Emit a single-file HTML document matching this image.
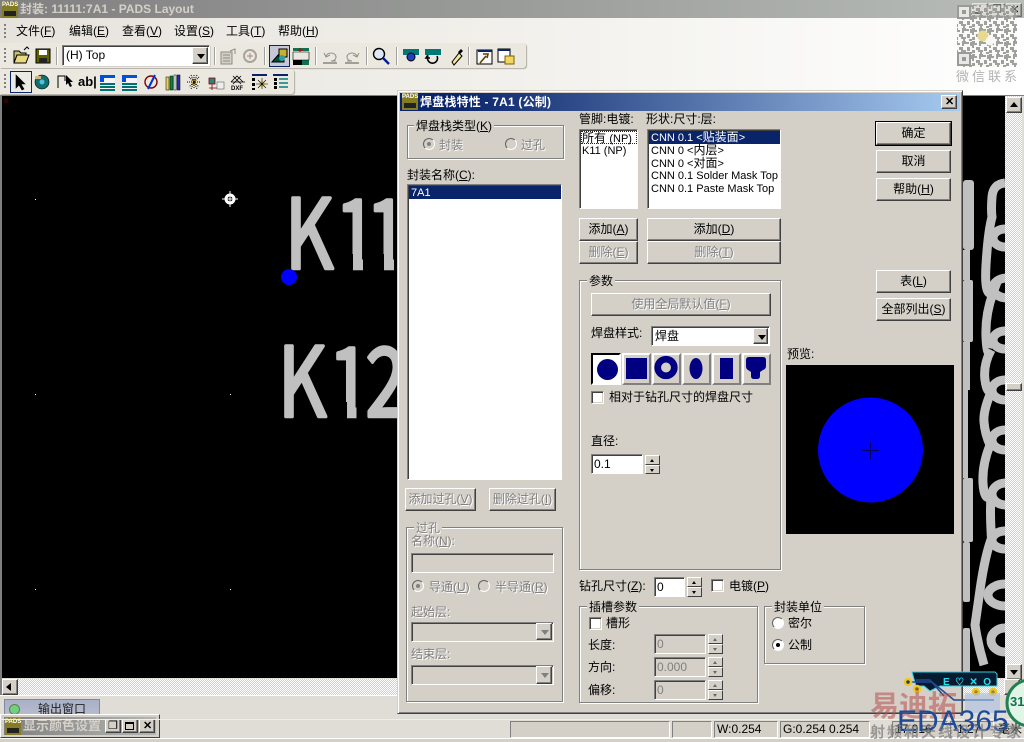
<!DOCTYPE html>
<html><head><meta charset="utf-8"><title>PADS Layout</title>
<style>
html,body{margin:0;padding:0;width:1024px;height:742px;overflow:hidden;background:#e0ddd6}
*{box-sizing:border-box}
body{font:12px/13px "Liberation Sans","WenQuanYi Zen Hei","Noto Sans CJK SC",sans-serif;color:#000;position:relative}
.a{position:absolute}
.t{position:absolute;white-space:nowrap;line-height:14px}
.l{font-size:11px}
.d{color:#808080;text-shadow:1px 1px 0 #fff}
.btn{position:absolute;background:#d4d0c8;border:1px solid;border-color:#fff #404040 #404040 #fff;box-shadow:inset -1px -1px 0 #808080;text-align:center;white-space:nowrap}
.btn.k{outline:1px solid #000;outline-offset:0}
.in{position:absolute;background:#fff;border:1px solid;border-color:#808080 #fff #fff #808080;box-shadow:inset 1px 1px 0 #404040,1px 1px 0 #d4d0c8;white-space:nowrap}
.in.g{background:#d4d0c8}
.grp{position:absolute;border:1px solid #808080;box-shadow:1px 1px 0 #fff,inset 1px 1px 0 #fff}
.grp>b{position:absolute;left:7px;top:-6px;background:#d4d0c8;padding:0 2px;font-weight:normal;line-height:12px;white-space:nowrap}
.sel{position:absolute;background:#0a246a;color:#fff;white-space:nowrap;padding-left:2px;line-height:13px}
.cb{position:absolute;width:13px;height:13px;background:#fff;border:1px solid;border-color:#808080 #fff #fff #808080;box-shadow:inset 1px 1px 0 #404040,inset -1px -1px 0 #d4d0c8}
.r{position:absolute;width:12px;height:12px;border-radius:50%;background:#fff;border:1px solid;border-color:#606060 #fff #fff #606060;box-shadow:0 0 0 .5px #d4d0c8}
.r.g{background:#d4d0c8}
.r.on::after{content:"";position:absolute;left:3px;top:3px;width:4px;height:4px;border-radius:50%;background:#000}
.r.g.on::after{background:#808080}
.sp{position:absolute;width:15px}
.sp i{display:block;height:50%;background:#d4d0c8;border:1px solid;border-color:#fff #404040 #404040 #fff;position:relative}
.sp i::after{content:"";position:absolute;left:4px;top:3px;border:2.5px solid transparent}
.sp i:first-child::after{border-bottom:3px solid #000;border-top:0}
.sp i:last-child::after{border-top:3px solid #000;border-bottom:0}
.sp.g i::after{opacity:.5}
.dd{position:absolute;background:#d4d0c8;border:1px solid;border-color:#fff #404040 #404040 #fff;box-shadow:inset -1px -1px 0 #808080}
.dd::after{content:"";position:absolute;left:4px;top:6px;border:4px solid transparent;border-top:5px solid #000;border-bottom:0}
.dd.g::after{border-top-color:#808080}
.sh{position:absolute;top:353px;height:32px;background:#d4d0c8;border:2px solid;border-color:#fff #808080 #808080 #fff}
.sep{position:absolute;width:2px;border-left:1px solid #a0a0a0;border-right:1px solid #fff}
.tb{position:absolute;background:#ebe8e0;box-shadow:1px 1px 1px #b0aca4;border-radius:0 3px 3px 0}
.grip{position:absolute;width:2px;height:14px;background:repeating-linear-gradient(#808080 0 2px,transparent 2px 4px)}
.chk{background:repeating-conic-gradient(#fff 0 25%,#d4d0c8 0 50%) 0 0/2px 2px}
.pads{position:absolute;width:16px;height:17px;background:#847c22;overflow:hidden;color:#fff;font:bold 6px/8px "Liberation Sans",sans-serif;text-align:center;white-space:nowrap}
.pads::after{content:"";position:absolute;left:2px;top:10px;width:12px;height:5px;background:#222}
.sb{position:absolute;background:#d4d0c8;border:1px solid;border-color:#fff #404040 #404040 #fff;box-shadow:inset -1px -1px 0 #808080}
</style></head><body>

<!-- top chrome -->
<div class="a" style="left:0;top:0;width:1024px;height:18px;background:linear-gradient(90deg,#808080,#9a9c9a 50%,#b8bdb8)"></div>
<div class="pads" style="left:2px;top:1px">PADS</div>
<div class="t" style="left:20px;top:2px;color:#d4d0c8;font-weight:bold;font-size:12px">封装: 11111:7A1 - PADS Layout</div>
<div class="a" style="left:0;top:18px;width:1024px;height:78px;background:linear-gradient(90deg,#e6e3dc,#f4f3ef 60%,#fff)"></div>
<div class="grip" style="left:4px;top:24px"></div>
<div class="t" style="left:16px;top:24px">文件(<u>F</u>)</div>
<div class="t" style="left:69px;top:24px">编辑(<u>E</u>)</div>
<div class="t" style="left:122px;top:24px">查看(<u>V</u>)</div>
<div class="t" style="left:174px;top:24px">设置(<u>S</u>)</div>
<div class="t" style="left:226px;top:24px">工具(<u>T</u>)</div>
<div class="t" style="left:278px;top:24px">帮助(<u>H</u>)</div>

<div class="tb" style="left:0;top:43px;width:526px;height:25px"></div>
<div class="tb" style="left:0;top:69px;width:294px;height:25px"></div>
<div class="grip" style="left:4px;top:48px"></div>
<div class="grip" style="left:4px;top:74px"></div>
<div class="in" style="left:62px;top:45px;width:148px;height:21px;padding:3px 0 0 3px">(H) Top</div>
<div class="dd" style="left:192px;top:47px;width:16px;height:17px"></div>
<div class="sep" style="left:56px;top:47px;height:18px"></div>
<div class="sep" style="left:214px;top:47px;height:18px"></div>
<div class="sep" style="left:264px;top:47px;height:18px"></div>
<div class="sep" style="left:315px;top:47px;height:18px"></div>
<div class="sep" style="left:366px;top:47px;height:18px"></div>
<div class="sep" style="left:396px;top:47px;height:18px"></div>
<div class="sep" style="left:468px;top:47px;height:18px"></div>
<div class="a" style="left:269px;top:45px;width:21px;height:22px;background:#c6c8d8;border:1px solid #0a246a"></div>
<div class="a" style="left:10px;top:71px;width:22px;height:22px;background:#eceae4;border:1px solid #0a246a"></div>
<div class="t" style="left:78px;top:75px;font-weight:bold;font-size:13px">ab|</div>

<svg class="a" style="left:0;top:0" width="530" height="96">
<!-- open -->
<path d="M14 51h5l2 2h5v2h-9l-3 8z" fill="#c8c070" stroke="#000"/><path d="M14 63l3-8h12l-3 8z" fill="#e8d880" stroke="#000"/><path d="M24 50l3-3 2 2" fill="none" stroke="#000"/>
<!-- save -->
<rect x="36" y="49" width="14" height="14" fill="#606000" stroke="#000"/><rect x="39" y="50" width="8" height="5" fill="#fff"/><rect x="39" y="58" width="8" height="5" fill="#222"/>
<!-- disabled -->
<path d="M221 52h11v12h-11z" fill="#d4d0c8" stroke="#908c84"/><path d="M223 55h7M223 58h7M223 61h7M230 51l5-2v5" stroke="#908c84" fill="none"/>
<circle cx="250" cy="56" r="6" fill="none" stroke="#a8a49c" stroke-width="2"/><path d="M247 56h6M250 53v6" stroke="#a08888"/>
<!-- active -->
<path d="M272 62l7-8 3 3 2-1v6z" fill="#005040" stroke="#000"/><rect x="279" y="49" width="8" height="8" fill="#c8b030" stroke="#000"/><circle cx="282" cy="58" r="3" fill="#30a0a0"/>
<!-- board -->
<rect x="293" y="48" width="16" height="3" fill="#107050"/><rect x="293" y="60" width="16" height="5" fill="#107050"/><path d="M293 52h16v8h-16z" fill="#e8e8e0" stroke="#000" stroke-width=".6"/><path d="M300 48v4M298 50h5" stroke="#c00000"/><rect x="293" y="60" width="9" height="5" fill="#000"/>
<!-- undo redo -->
<path d="M326 57a5 4 0 1 1 5 4h5M324 53l2 4 4-2" fill="none" stroke="#909088"/><rect x="323" y="62" width="14" height="2" fill="#a0a098"/>
<path d="M357 57a5 4 0 1 0-5 4h-5M359 53l-2 4-4-2" fill="none" stroke="#909088"/><rect x="345" y="62" width="14" height="2" fill="#a0a098"/>
<!-- zoom -->
<circle cx="379" cy="54" r="5.5" fill="#dfe8f8" stroke="#000" stroke-width="1.4"/><path d="M383 58l6 6" stroke="#002090" stroke-width="2.4"/>
<!-- teal icons -->
<path d="M403 49h16v6h-4v2h-8v-2h-4z" fill="#007878"/><circle cx="411" cy="57" r="4" fill="#2040c0" stroke="#000"/>
<path d="M425 49h16v6h-16z" fill="#007878"/><path d="M428 56a5 5 0 1 0 9 0M428 55l-2 3h4" fill="none" stroke="#000" stroke-width="1.6"/>
<path d="M452 62l7-9 3 3-8 9z" fill="#f0e8a0" stroke="#000"/><path d="M458 52l3-3 2 2-3 3z" fill="#000"/>
<rect x="477" y="50" width="15" height="14" fill="#f8f8f8" stroke="#000"/><path d="M478 50h14v2h-14z" fill="#0a246a"/><path d="M480 63l6-7M483 54h5l-1 4" stroke="#604000" stroke-width="1.6" fill="none"/>
<rect x="498" y="49" width="12" height="13" fill="#fff" stroke="#000"/><path d="M498 49h12v2h-12z" fill="#0a246a"/><rect x="505" y="56" width="9" height="8" fill="#f0d860" stroke="#806000"/>
<!-- row 3 -->
<path d="M16 75l0 13 3-3 3 5 2-1-3-5 4 0z" fill="#000" stroke="#000" stroke-width=".6"/>
<circle cx="42" cy="82" r="7" fill="#107070" stroke="#000" stroke-width=".6"/><circle cx="42" cy="82" r="2.5" fill="#50c0e0"/><path d="M35 76h6v3h-6z" fill="#c8b888"/>
<path d="M58 88v-12h7v5" fill="none" stroke="#000"/><path d="M66 75v10l2-2 2 4 2-1-2-4 3 0z"/>
<g><rect x="100" y="75" width="15" height="15" fill="#f4f4f4"/><path d="M100 75h15v3h-11v4h-4z" fill="#0050e0"/><path d="M100 84h15M100 87h15M100 90h15" stroke="#007070" stroke-width="2"/></g>
<g><rect x="122" y="75" width="15" height="15" fill="#f4f4f4"/><path d="M122 82v-7h15v3h-11v4z" fill="#0050e0"/><path d="M122 84h15M122 87h15M122 90h15" stroke="#007070" stroke-width="2"/></g>
<circle cx="151" cy="82" r="6" fill="none" stroke="#800000" stroke-width="1.4"/><path d="M148 89l7-14" stroke="#0030e0" stroke-width="2"/>
<rect x="166" y="77" width="3" height="13" fill="#e8d060" stroke="#000" stroke-width=".5"/><rect x="170" y="76" width="3" height="14" fill="#108040" stroke="#000" stroke-width=".5"/><rect x="174" y="75" width="2" height="15" fill="#fff" stroke="#000" stroke-width=".5"/><rect x="177" y="75" width="3" height="15" fill="#2030b0" stroke="#000" stroke-width=".5"/>
<circle cx="194" cy="82" r="3" fill="#f0d860"/><path d="M187 82h14M194 75v14M189 77l10 10M199 77l-10 10M191 75l6 14M197 75l-6 14" stroke="#000" stroke-width="1" stroke-dasharray="1 1"/>
<path d="M209 78h6v6h-6zM212 84v6M209 88h15" fill="#308080" stroke="#800000" stroke-width=".8"/><rect x="217" y="82" width="7" height="7" fill="#eee" stroke="#606060" stroke-width=".6"/>
<path d="M231 82l6-6 6 6M233 76l8 8M241 76l-8 8M231 82h14" fill="none" stroke="#000" stroke-width=".8"/>
<rect x="252" y="74" width="15" height="2" fill="#0a246a"/><path d="M252 78h3v3h-3zM252 83h3v3h-3zM252 88h3v2h-3z" fill="#000"/><circle cx="262" cy="84" r="3" fill="#f0d860"/><path d="M256 84h12M262 78v11M258 80l8 8M266 80l-8 8" stroke="#000" stroke-width=".6"/>
<rect x="273" y="74" width="15" height="2" fill="#0a246a"/><path d="M274 78h3v3h-3zM274 82h3v3h-3zM274 86h3v3h-3z" fill="#000"/><path d="M279 79h9M279 83h9M279 87h9" stroke="#008080" stroke-width="1.5"/>
<text x="231" y="90" font-family="Liberation Sans" font-size="6" font-weight="bold">DXF</text>
</svg>

<!-- canvas -->
<div class="a" style="left:0;top:95px;width:1024px;height:1px;background:#808080"></div>
<div class="a" style="left:0;top:96px;width:2px;height:600px;background:#808080"></div>
<svg class="a" style="left:2px;top:96px" width="1003" height="582" viewBox="2 96 1003 582">
<rect x="2" y="96" width="1003" height="582" fill="#000"/>
<circle cx="6" cy="101" r="2.5" fill="#300000"/>
<g fill="#fff"><rect x="35" y="199" width="1" height="1"/><rect x="35" y="394" width="1" height="1"/><rect x="230" y="394" width="1" height="1"/><rect x="35" y="589" width="1" height="1"/><rect x="230" y="589" width="1" height="1"/></g>
<circle cx="230" cy="199" r="4" fill="none" stroke="#fff" stroke-width="3"/><path d="M222 199h16M230 191v16" stroke="#fff"/><rect x="229.500" y="198.500" width="1" height="1" fill="#fff"/>
<g fill="#c0c0c0" stroke="#c0c0c0" stroke-width="3.500" stroke-linejoin="round" font-family="'Noto Sans CJK SC',sans-serif" font-size="96">
<text transform="translate(0 268.300) scale(.78 1)" x="365.400 429.500 469.200">K11</text>
<text transform="translate(0 416.300) scale(.78 1)" x="356.400 421.200 468.600">K12</text>
</g>
<g fill="#000">
<rect x="337" y="254" width="16" height="20"/><rect x="363" y="254" width="21" height="20"/><rect x="394" y="254" width="5" height="20"/>
<rect x="331" y="402" width="16" height="20"/><rect x="356.500" y="402" width="10" height="20"/>
</g>
<circle cx="289" cy="277" r="8" fill="#0000ff"/>
<g fill="#c0c0c0"><rect x="963" y="180" width="11" height="70" rx="3"/><rect x="963" y="250" width="7" height="30"/><rect x="963" y="280" width="10" height="62" rx="2"/><rect x="963" y="342" width="7" height="48"/><rect x="963" y="390" width="5" height="88"/><rect x="963" y="478" width="10" height="64" rx="2"/><rect x="963" y="542" width="7" height="60" rx="2"/><rect x="963" y="628" width="7" height="50" rx="2"/></g>
<g fill="none" stroke="#c0c0c0" stroke-width="9">
<path d="M1005 183Q993 184 992 197T992 217Q988 232 986 265T993 293Q985 315 986 337T991 350Q983 365 985 380T992 390Q983 410 984 422T990 445Q982 465 983 483T991 497Q990 510 991 530T992 537Q985 555 980 590T975 625Q978 645 984 665"/>
<ellipse cx="1005" cy="238" rx="12" ry="9"/><ellipse cx="1007" cy="288" rx="14" ry="10"/><ellipse cx="1005" cy="340" rx="12" ry="9"/><ellipse cx="1005" cy="390" rx="13" ry="10"/><ellipse cx="1005" cy="440" rx="13" ry="10"/><ellipse cx="1006" cy="494" rx="14" ry="11"/><ellipse cx="1005" cy="540" rx="13" ry="9"/><ellipse cx="1005" cy="595" rx="17" ry="11"/><ellipse cx="1005" cy="640" rx="14" ry="12"/>
</g>
</svg>
<div class="a chk" style="left:1005px;top:96px;width:17px;height:582px"></div>
<div class="sb" style="left:1006px;top:97px;width:16px;height:16px"></div>
<div class="a" style="left:1010px;top:102px;border:4px solid transparent;border-bottom:5px solid #000;border-top:0"></div>
<div class="sb" style="left:1006px;top:383px;width:16px;height:8px"></div>
<div class="sb" style="left:1006px;top:664px;width:16px;height:16px"></div>
<div class="a" style="left:1010px;top:670px;border:4px solid transparent;border-top:5px solid #000;border-bottom:0"></div>
<div class="a chk" style="left:2px;top:679px;width:1003px;height:16px"></div>
<div class="sb" style="left:2px;top:679px;width:16px;height:16px"></div>
<div class="a" style="left:6px;top:683px;border:4px solid transparent;border-right:5px solid #000;border-left:0"></div>
<div class="sb" style="left:1004px;top:679px;width:16px;height:16px"></div>
<div class="a" style="left:0;top:695px;width:400px;height:1px;background:#fff"></div>

<!-- lower bar -->
<div class="a" style="left:4px;top:699px;width:96px;height:18px;background:linear-gradient(#a8b0c8,#b8bccc);border:1px solid #8088a0"></div>
<div class="a" style="left:9px;top:704px;width:11px;height:11px;border-radius:50%;background:#70d080;border:1px solid #608050"></div>
<div class="t" style="left:38px;top:702px;color:#222">输出窗口</div>
<div class="a" style="left:0;top:714px;width:160px;height:24px;background:#d4d0c8;border:1px solid;border-color:#fff #404040 #404040 #fff"></div>
<div class="a" style="left:4px;top:717px;width:152px;height:18px;background:linear-gradient(90deg,#808080,#b4b4b0)"></div>
<div class="pads" style="left:5px;top:718px">PADS</div>
<div class="t" style="left:23px;top:719px;color:#d4d0c8;font-weight:bold;font-size:13px">显示颜色设置</div>
<div class="sb" style="left:105px;top:719px;width:16px;height:14px"></div><div class="t" style="left:108px;top:719px;font-size:11px">❐</div>
<div class="sb" style="left:122px;top:719px;width:16px;height:14px"></div><div class="a" style="left:125px;top:722px;width:9px;height:8px;border:1px solid #000;border-top-width:2px"></div>
<div class="sb" style="left:139px;top:719px;width:16px;height:14px"></div><div class="t" style="left:143px;top:719px;font-weight:bold;font-size:11px">✕</div>

<!-- status bar -->
<div class="a" style="left:0;top:738px;width:1024px;height:4px;background:#d4d0c8;border-top:1px solid #fff"></div>
<div class="a" style="left:0;top:719px;width:1024px;height:1px;background:#f0eee8"></div>
<div class="in g" style="left:510px;top:721px;width:160px;height:17px;box-shadow:none"></div>
<div class="in g" style="left:672px;top:721px;width:40px;height:17px;box-shadow:none"></div>
<div class="in g" style="left:714px;top:721px;width:64px;height:17px;box-shadow:none;padding:1px 0 0 2px">W:0.254</div>
<div class="in g" style="left:780px;top:721px;width:90px;height:17px;box-shadow:none;padding:1px 0 0 2px">G:0.254 0.254</div>
<div class="in g" style="left:892px;top:721px;width:56px;height:17px;box-shadow:none;padding:1px 0 0 2px">17.916</div>
<div class="in g" style="left:950px;top:721px;width:44px;height:17px;box-shadow:none;padding:1px 0 0 2px">-1.27</div>
<div class="t" style="left:998px;top:722px">毫米</div>

<!-- dialog -->
<div class="a" style="left:397px;top:90px;width:566px;height:624px;background:#d4d0c8;border:1px solid;border-color:#d4d0c8 #404040 #404040 #d4d0c8;box-shadow:inset 1px 1px 0 #fff,inset -1px -1px 0 #808080"></div>
<div class="a" style="left:400px;top:93px;width:560px;height:18px;background:linear-gradient(90deg,#0a246a,#0a246a 10%,#a6caf0)"></div>
<div class="pads" style="left:402px;top:93px">PADS</div>
<div class="t" style="left:420px;top:95px;color:#fff;font-weight:bold;letter-spacing:.2px">焊盘栈特性 - 7A1 (公制)</div>
<div class="sb" style="left:941px;top:95px;width:16px;height:14px"></div>
<div class="t" style="left:945px;top:95px;font-weight:bold;font-size:11px">✕</div>

<div class="grp" style="left:407px;top:125px;width:157px;height:34px"><b style="left:6px">焊盘栈类型(<u>K</u>)</b></div>
<div class="r g on" style="left:423px;top:138px"></div><div class="t d" style="left:439px;top:138px">封装</div>
<div class="r g" style="left:505px;top:138px"></div><div class="t d" style="left:521px;top:138px">过孔</div>
<div class="t" style="left:407px;top:168px">封装名称(<u>C</u>):</div>
<div class="in" style="left:407px;top:184px;width:155px;height:296px"></div>
<div class="sel" style="left:409px;top:186px;width:152px;height:13px"><span class="l">7A1</span></div>

<div class="t" style="left:579px;top:112px">管脚:电镀:</div>
<div class="t" style="left:646px;top:112px">形状:尺寸:层:</div>
<div class="in" style="left:579px;top:129px;width:59px;height:80px"></div>
<div class="a" style="left:581px;top:131px;width:56px;height:13px;border:1px dotted #0a246a"></div>
<div class="t" style="left:582px;top:131px">所有 <span class="l">(NP)</span></div>
<div class="t l" style="left:582px;top:144px">K11 (NP)</div>
<div class="in" style="left:647px;top:129px;width:134px;height:80px"></div>
<div class="sel" style="left:649px;top:131px;width:131px;height:13px"><span class="l">CNN 0.1 &lt;</span>贴装面<span class="l">&gt;</span></div>
<div class="t" style="left:651px;top:144px;line-height:13px"><span class="l">CNN 0 &lt;</span>内层<span class="l">&gt;</span></div>
<div class="t" style="left:651px;top:157px;line-height:13px"><span class="l">CNN 0 &lt;</span>对面<span class="l">&gt;</span></div>
<div class="t l" style="left:651px;top:170px;line-height:13px">CNN 0.1 Solder Mask Top</div>
<div class="t l" style="left:651px;top:183px;line-height:13px">CNN 0.1 Paste Mask Top</div>

<div class="btn" style="left:579px;top:218px;width:59px;height:23px;line-height:20px">添加(<u>A</u>)</div>
<div class="btn d" style="left:579px;top:241px;width:59px;height:23px;line-height:20px">删除(<u>E</u>)</div>
<div class="btn" style="left:647px;top:218px;width:134px;height:23px;line-height:20px">添加(<u>D</u>)</div>
<div class="btn d" style="left:647px;top:241px;width:134px;height:23px;line-height:20px">删除(<u>T</u>)</div>

<div class="grp" style="left:579px;top:280px;width:202px;height:290px"><b>参数</b></div>
<div class="btn d" style="left:591px;top:293px;width:180px;height:23px;line-height:20px">使用全局默认值(<u>F</u>)</div>
<div class="t" style="left:591px;top:326px">焊盘样式:</div>
<div class="in" style="left:651px;top:326px;width:119px;height:20px;padding:3px 0 0 3px">焊盘</div>
<div class="dd" style="left:753px;top:328px;width:15px;height:16px"></div>
<div class="sh" style="left:591px;width:30px;border-color:#000 #fff #fff #000;background:#fff"></div>
<div class="sh" style="left:622px;width:29px"></div>
<div class="sh" style="left:652px;width:29px"></div>
<div class="sh" style="left:682px;width:29px"></div>
<div class="sh" style="left:712px;width:29px"></div>
<div class="sh" style="left:742px;width:29px"></div>
<svg class="a" style="left:590px;top:352px" width="182" height="34" viewBox="590 352 182 34" fill="#000080">
<circle cx="607.500" cy="369.500" r="10.500"/><rect x="626" y="358" width="21" height="21"/>
<circle cx="666" cy="367.500" r="8.300" fill="none" stroke="#000080" stroke-width="6.700"/>
<ellipse cx="696" cy="368.500" rx="6.500" ry="10.500"/><rect x="720" y="358" width="13" height="21"/>
<path d="M746 360q0-3 3-3h14q3 0 3 3v6q0 3-3 4l-3 2v4q0 3-3 3h-3q-3 0-3-3v-4l-3-2q-2-1-2-4z"/>
</svg>
<div class="cb" style="left:591px;top:391px"></div>
<div class="t" style="left:609px;top:390px">相对于钻孔尺寸的焊盘尺寸</div>
<div class="t" style="left:591px;top:434px">直径:</div>
<div class="in" style="left:591px;top:454px;width:52px;height:20px;padding:3px 0 0 2px">0.1</div>
<div class="sp" style="left:645px;top:455px;height:19px"><i></i><i></i></div>

<div class="t" style="left:579px;top:579px">钻孔尺寸(<u>Z</u>):</div>
<div class="in" style="left:654px;top:577px;width:31px;height:20px;padding:3px 0 0 2px">0</div>
<div class="sp" style="left:687px;top:577px;height:20px"><i></i><i></i></div>
<div class="cb" style="left:711px;top:579px"></div>
<div class="t" style="left:729px;top:579px">电镀(<u>P</u>)</div>

<div class="grp" style="left:579px;top:606px;width:179px;height:97px"><b>插槽参数</b></div>
<div class="cb" style="left:589px;top:617px"></div>
<div class="t" style="left:606px;top:616px">槽形</div>
<div class="t" style="left:588px;top:638px">长度:</div>
<div class="in g" style="left:654px;top:634px;width:52px;height:20px;padding:3px 0 0 2px;color:#808080">0</div>
<div class="sp g" style="left:708px;top:634px;height:20px"><i></i><i></i></div>
<div class="t" style="left:588px;top:660px">方向:</div>
<div class="in g" style="left:654px;top:657px;width:52px;height:20px;padding:3px 0 0 2px;color:#808080">0.000</div>
<div class="sp g" style="left:708px;top:657px;height:20px"><i></i><i></i></div>
<div class="t" style="left:588px;top:683px">偏移:</div>
<div class="in g" style="left:654px;top:680px;width:52px;height:20px;padding:3px 0 0 2px;color:#808080">0</div>
<div class="sp g" style="left:708px;top:680px;height:20px"><i></i><i></i></div>

<div class="grp" style="left:764px;top:606px;width:101px;height:58px"><b>封装单位</b></div>
<div class="r" style="left:772px;top:617px"></div><div class="t" style="left:788px;top:616px">密尔</div>
<div class="r on" style="left:772px;top:639px"></div><div class="t" style="left:788px;top:638px">公制</div>

<div class="btn d" style="left:405px;top:488px;width:71px;height:23px;line-height:20px">添加过孔(<u>V</u>)</div>
<div class="btn d" style="left:489px;top:488px;width:67px;height:23px;line-height:20px">删除过孔(<u>I</u>)</div>
<div class="grp" style="left:406px;top:527px;width:157px;height:175px"><b class="d">过孔</b></div>
<div class="t d" style="left:411px;top:534px">名称(<u>N</u>):</div>
<div class="in g" style="left:411px;top:553px;width:143px;height:20px"></div>
<div class="r g on" style="left:412px;top:580px"></div><div class="t d" style="left:429px;top:580px">导通(<u>U</u>)</div>
<div class="r g" style="left:478px;top:580px"></div><div class="t d" style="left:495px;top:580px">半导通(<u>R</u>)</div>
<div class="t d" style="left:411px;top:605px">起始层:</div>
<div class="in g" style="left:411px;top:622px;width:143px;height:20px"></div>
<div class="dd g" style="left:536px;top:623px;width:16px;height:17px"></div>
<div class="t d" style="left:411px;top:647px">结束层:</div>
<div class="in g" style="left:411px;top:665px;width:143px;height:20px"></div>
<div class="dd g" style="left:536px;top:666px;width:16px;height:18px"></div>

<div class="btn k" style="left:876px;top:122px;width:75px;height:23px;line-height:20px">确定</div>
<div class="btn" style="left:876px;top:150px;width:75px;height:23px;line-height:20px">取消</div>
<div class="btn" style="left:876px;top:178px;width:75px;height:23px;line-height:20px">帮助(<u>H</u>)</div>
<div class="btn" style="left:876px;top:270px;width:75px;height:23px;line-height:20px">表(<u>L</u>)</div>
<div class="btn" style="left:876px;top:298px;width:75px;height:23px;line-height:20px">全部列出(<u>S</u>)</div>
<div class="t" style="left:787px;top:347px">预览:</div>
<svg class="a" style="left:786px;top:365px" width="168" height="169" viewBox="786 365 168 169">
<rect x="786" y="365" width="168" height="169" fill="#000"/><circle cx="870.500" cy="450" r="52.500" fill="#0000ff"/><path d="M862 450.500h17M870.500 442v17" stroke="#000060"/>
</svg>

<!-- window buttons beneath QR watermark -->
<div class="sb" style="left:972px;top:3px;width:16px;height:14px;opacity:.6"></div>
<div class="sb" style="left:989px;top:3px;width:16px;height:14px;opacity:.6"></div>
<div class="sb" style="left:1006px;top:3px;width:16px;height:14px;opacity:.6"></div>
<div class="a" style="left:975px;top:12px;width:6px;height:2px;background:#000"></div>
<div class="t" style="left:992px;top:3px;font-size:11px">❐</div>
<div class="t" style="left:1010px;top:3px;font-size:11px;font-weight:bold">✕</div>
<svg class="a" style="left:955px;top:2px" width="69" height="84" viewBox="0 0 69 84">
<defs><pattern id="q" width="17" height="13" patternUnits="userSpaceOnUse"><path d="M0 0h3v2h2v2H2v3H0zM7 0h4v1h3v2H9v2H7zM15 1h2v4h-2zM4 6h4v3h3v2H6V9H4zM12 6h3v4h-3zM0 9h3v3H0zM8 11h2v2H8zM14 11h3v2h-3z" fill="#969692"/></pattern></defs>
<rect x="2" y="3" width="60" height="62" fill="#f4f4f0" opacity=".45"/>
<rect x="2" y="3" width="60" height="62" fill="url(#q)" opacity=".9"/>
<g fill="#e8e8e4" stroke="#9a9a96" stroke-width="2"><rect x="3" y="4" width="12" height="12"/><rect x="3" y="51" width="12" height="12"/></g>
<rect x="7" y="8" width="4" height="4" fill="#9a9a96"/><rect x="7" y="55" width="4" height="4" fill="#9a9a96"/>
<circle cx="28" cy="34" r="5.500" fill="#e8d890"/><circle cx="35" cy="39" r="4.500" fill="#f8f8f4"/>
</svg>
<div class="t" style="left:956px;top:70px;color:#b4b4b4;font-size:13px;letter-spacing:3px">微信联系</div>

<!-- watermark bottom right -->
<svg class="a" style="left:860px;top:670px" width="164" height="72" viewBox="0 0 164 72">
<path d="M52 2h83l2 2v12H80l-10 5-6-5H56z" fill="#061a30" stroke="#30d0e0"/>
<path d="M48 12h24l22 18h40M56 10h14l14 16" fill="none" stroke="#204890" stroke-width="1.500"/>
<circle cx="48" cy="12" r="3" fill="#204060" stroke="#f0c820" stroke-width="2.500"/><circle cx="57" cy="19" r="3" fill="#806020" stroke="#f0c820" stroke-width="2.500"/><circle cx="116" cy="22" r="3" fill="#a08050" stroke="#f0c820" stroke-width="2.500"/><circle cx="133" cy="22" r="3" fill="#a08050" stroke="#f0c820" stroke-width="2.500"/>
<text x="83" y="15" fill="#20e0f0" font-family="Liberation Sans" font-weight="bold" font-size="10" textLength="48">E♡✕O</text>
<circle cx="170" cy="33" r="23" fill="#e0f4e8" stroke="#208050" stroke-width="3"/>
<text x="150" y="36" fill="#107050" font-family="Liberation Sans" font-weight="bold" font-size="13">31</text>
<rect x="105" y="23" width="35" height="20" fill="#a8c0e0" opacity=".6"/>
<text x="10" y="46" fill="#b85050" opacity=".55" font-family="Noto Sans CJK SC,sans-serif" font-weight="bold" font-size="29">易迪拓</text>
</svg>
<div class="t" style="left:897px;top:707px;color:#1e4a9a;font-size:30px;line-height:30px">EDA365</div>
<div class="t" style="left:870px;top:725px;color:#808080;opacity:.75;font-size:15px;line-height:16px;font-weight:bold;letter-spacing:2px">射频和天线设计专家</div>
</body></html>
